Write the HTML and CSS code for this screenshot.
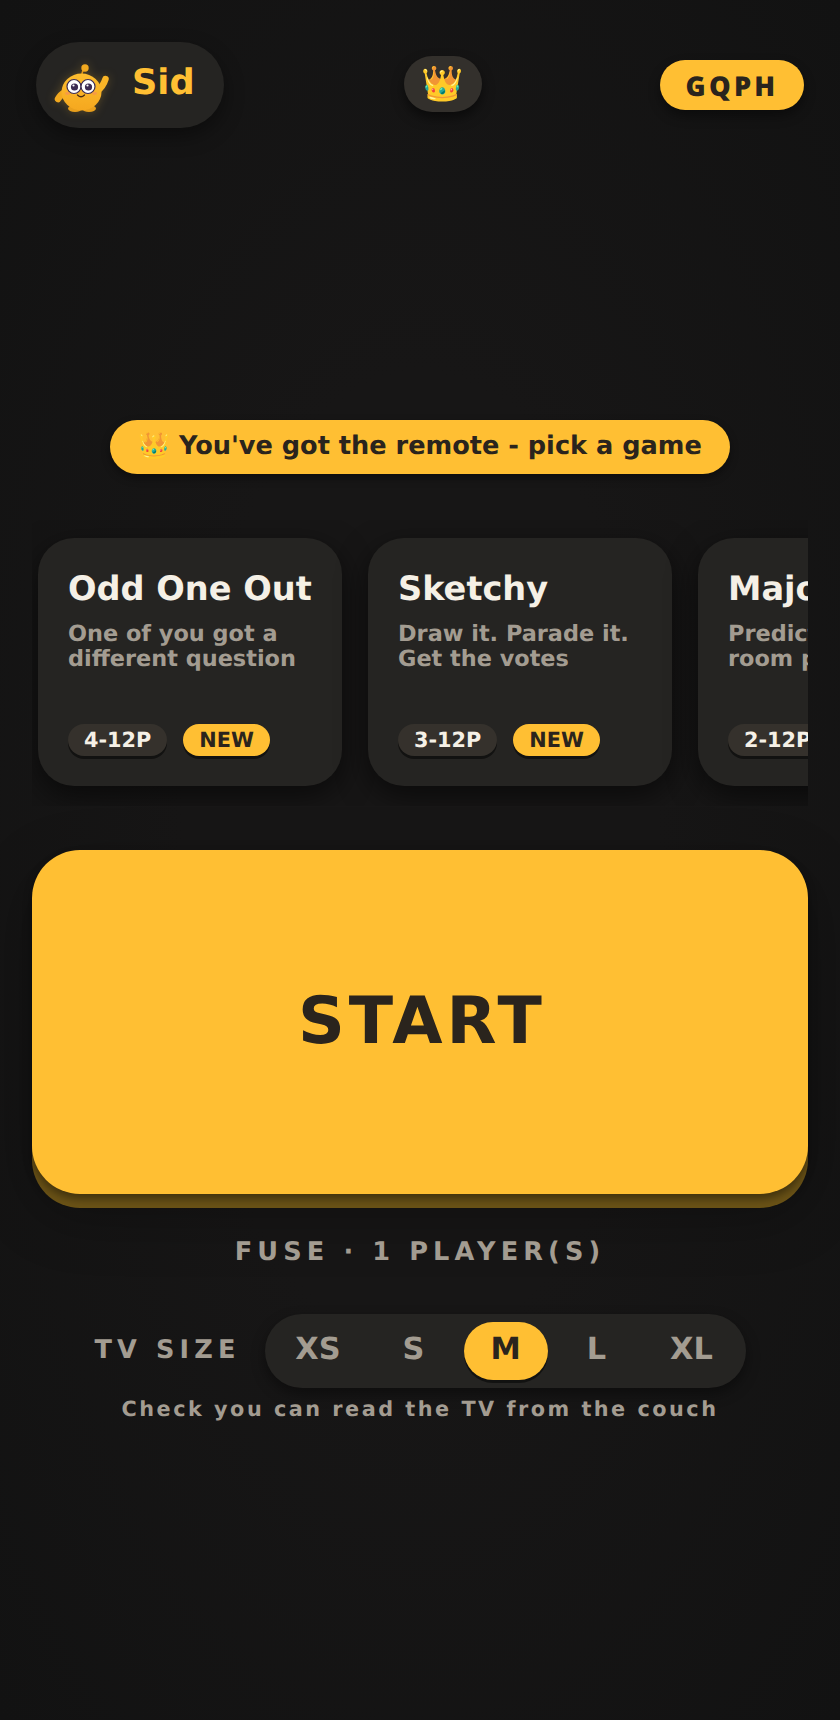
FILE: index.html
```html
<!DOCTYPE html>
<html lang="en">
	<head>
		<meta charset="UTF-8">
		<meta name="viewport" content="width=device-width,initial-scale=1">
		<title>Remote</title>
		<link rel="stylesheet" href="styles.css">
	</head>
	<body>
		<main class="page">
			<header class="top">
				<div class="player">
					<svg class="player__face" viewBox="14 6 56 56" aria-hidden="true">
						<defs>
							<linearGradient id="skin" x1="0" y1="0" x2="0" y2="1">
								<stop offset="0" stop-color="#fdbd2e"/>
								<stop offset="1" stop-color="#f5a81f"/>
							</linearGradient>
						</defs>
						<path d="M42 25 Q41.500 20 45 18" fill="none" stroke="#e0971a" stroke-width="1.500"/>
						<circle cx="45" cy="17" r="3.700" fill="#f2a91f"/>
						<path d="M57 40 Q63 36 65.500 28" fill="none" stroke="#fbb526" stroke-width="6.500" stroke-linecap="round"/>
						<path d="M25 41 Q20 44 18 48" fill="none" stroke="#f2a91f" stroke-width="6.500" stroke-linecap="round"/>
						<ellipse cx="35" cy="57.500" rx="7" ry="3.500" fill="#e99f1c"/>
						<ellipse cx="49" cy="57.500" rx="7" ry="3.500" fill="#e99f1c"/>
						<ellipse cx="41.500" cy="41" rx="20" ry="18.500" fill="url(#skin)"/>
						<circle cx="34" cy="35.500" r="7" fill="#fff" stroke="#3b2b52" stroke-width="1.200"/>
						<circle cx="48" cy="35.500" r="7" fill="#fff" stroke="#3b2b52" stroke-width="1.200"/>
						<circle cx="34.500" cy="36" r="3.600" fill="#3b2b52"/>
						<circle cx="48.500" cy="36" r="3.600" fill="#3b2b52"/>
						<circle cx="33.500" cy="34.500" r="1.100" fill="#fff"/>
						<circle cx="47.500" cy="34.500" r="1.100" fill="#fff"/>
						<ellipse cx="27.500" cy="42.500" rx="2.500" ry="1.400" fill="#f58a5c" opacity="0.600"/>
						<ellipse cx="54.500" cy="42.500" rx="2.500" ry="1.400" fill="#f58a5c" opacity="0.600"/>
						<path d="M37.500 44 Q41 47.500 44.500 44" fill="none" stroke="#4a2c12" stroke-width="1.300" stroke-linecap="round"/>
					</svg>
					<span class="player__name">Sid</span>
				</div>
				<div class="host">👑</div>
				<div class="room">GQPH</div>
			</header>

			<p class="banner">👑 You've got the remote - pick a game</p>

			<section class="games">
				<article class="game">
					<h2 class="game__title">Odd One Out</h2>
					<p class="game__text">One of you got a different question</p>
					<div class="game__tags">
						<span class="tag">4-12P</span>
						<span class="tag tag--new">NEW</span>
					</div>
				</article>
				<article class="game">
					<h2 class="game__title">Sketchy</h2>
					<p class="game__text">Draw it. Parade it. Get the votes</p>
					<div class="game__tags">
						<span class="tag">3-12P</span>
						<span class="tag tag--new">NEW</span>
					</div>
				</article>
				<article class="game">
					<h2 class="game__title">Majority</h2>
					<p class="game__text">Predict what the room picks</p>
					<div class="game__tags">
						<span class="tag">2-12P</span>
					</div>
				</article>
			</section>

			<button class="start">START</button>

			<p class="status">FUSE · 1 PLAYER(S)</p>

			<div class="size">
				<span class="size__label">TV SIZE</span>
				<div class="size__options">
					<span class="size__item size__item--xs">XS</span>
					<span class="size__item size__item--s">S</span>
					<span class="size__item size__item--m is-active">M</span>
					<span class="size__item size__item--l">L</span>
					<span class="size__item size__item--xl">XL</span>
				</div>
			</div>
			<p class="hint">Check you can read the TV from the couch</p>
		</main>
	</body>
</html>
```

FILE: styles.css
```css
html,
body
{
	margin: 0;
	height: 100%;
}

body
{
	background: radial-gradient(ellipse at center, #171616 40%, #121212 100%);
	background-color: #141414;
	font-family: 'DejaVu Sans', sans-serif;
	font-weight: bold;
	color: #f5f0e6;
	text-rendering: geometricPrecision;
}

.page
{
	padding: 42px 32px 0;
}

.top
{
	display: flex;
	align-items: center;
	justify-content: space-between;
	padding: 0 4px;
	height: 86px;
}

.player
{
	box-sizing: border-box;
	width: 188px;
	height: 86px;
	padding-left: 18px;
	display: flex;
	align-items: center;
	gap: 22px;
	border-radius: 43px;
	background-color: #252422;
	box-shadow: 0 8px 20px rgba(0, 0, 0, 0.4);
}

.player__face
{
	width: 56px;
	height: 56px;
	flex: none;
	filter: drop-shadow(0 0 5px rgba(255, 190, 50, 0.25));
}

.player__name
{
	padding-bottom: 5px;
	font-size: 35.2px;
	color: #ffbf33;
}

.host
{
	width: 78px;
	height: 56px;
	margin: 0 0 2px 2px;
	display: flex;
	align-items: center;
	justify-content: center;
	border-radius: 28px;
	background-color: #33302c;
	box-shadow: 0 6px 12px rgba(0, 0, 0, 0.5);
	font-size: 34px;
}

.room
{
	box-sizing: border-box;
	width: 144px;
	height: 50px;
	display: flex;
	align-items: center;
	justify-content: center;
	border-radius: 25px;
	background-color: #ffbf33;
	box-shadow: 0 6px 12px rgba(0, 0, 0, 0.4);
	color: #2a241d;
	font-family: 'Open Sans', sans-serif;
	font-weight: 800;
	font-size: 27.2px;
	letter-spacing: 0.12em;
}

.banner
{
	box-sizing: border-box;
	width: 620px;
	height: 54px;
	margin: 292px auto 0;
	border-radius: 27px;
	background-color: #ffbf33;
	box-shadow: 0 4px 8px rgba(0, 0, 0, 0.4);
	color: #2a241d;
	font-size: 25.6px;
	line-height: 52px;
	text-align: center;
	white-space: nowrap;
}

.games
{
	display: flex;
	gap: 26px;
	margin-top: 46px;
	padding: 18px 6px 20px;
	overflow: hidden;
}

.game
{
	box-sizing: border-box;
	flex: 0 0 304px;
	height: 248px;
	padding: 31px 30px 30px;
	display: flex;
	flex-direction: column;
	border-radius: 36px;
	background-color: #252422;
	box-shadow: 0 10px 30px rgba(0, 0, 0, 0.55);
}

.game__title
{
	margin: 0;
	font-size: 33.6px;
	line-height: 40px;
	white-space: nowrap;
	color: #f5f0e6;
}

.game__text
{
	margin: 13px 0 0;
	font-size: 22.4px;
	line-height: 25.2px;
	color: #a39c91;
}

.game__tags
{
	margin-top: auto;
	display: flex;
	gap: 16px;
}

.tag
{
	height: 32px;
	padding: 0 16px;
	display: flex;
	align-items: center;
	border-radius: 16px;
	background-color: #35312c;
	box-shadow: 0 3px 0 rgba(0, 0, 0, 0.5);
	font-size: 20.8px;
	white-space: nowrap;
	color: #f5f0e6;
}

.tag--new
{
	background-color: #ffbf33;
	color: #2a241d;
}

.start
{
	display: block;
	box-sizing: border-box;
	width: 776px;
	height: 344px;
	margin-top: 44px;
	padding: 0 0 2px 4px;
	border: 0;
	border-radius: 48px;
	background-color: #ffbf33;
	box-shadow: 0 5px 8px rgba(0, 0, 0, 0.4), 0 14px 0 #6a5216, 0 20px 60px rgba(0, 0, 0, 0.3);
	color: #2a241d;
	font-family: 'DejaVu Sans', sans-serif;
	font-weight: bold;
	font-size: 65px;
	letter-spacing: 4px;
	text-rendering: geometricPrecision;
}

.status
{
	margin: 42px 0 0;
	text-align: center;
	font-size: 25.6px;
	line-height: 32px;
	letter-spacing: 0.2em;
	color: #a39c91;
}

.size
{
	display: flex;
	align-items: center;
	justify-content: center;
	gap: 24px;
	margin-top: 46px;
}

.size__label
{
	padding-bottom: 2px;
	font-size: 25.6px;
	letter-spacing: 0.2em;
	color: #a39c91;
}

.size__options
{
	box-sizing: border-box;
	width: 481px;
	height: 74px;
	padding: 8px;
	display: flex;
	align-items: center;
	border-radius: 37px;
	background-color: #252422;
	box-shadow: 0 6px 14px rgba(0, 0, 0, 0.4);
}

.size__item
{
	box-sizing: border-box;
	height: 58px;
	padding-bottom: 4px;
	display: flex;
	align-items: center;
	justify-content: center;
	border-radius: 29px;
	font-size: 30.4px;
	color: #a39c91;
}

.size__item--xs { width: 91px; }
.size__item--s { width: 100px; }
.size__item--m { width: 84px; }
.size__item--l { width: 98px; }
.size__item--xl { width: 92px; }

.size__item.is-active
{
	background-color: #ffbf33;
	box-shadow: 0 3px 0 rgba(0, 0, 0, 0.5);
	color: #2a241d;
}

.hint
{
	margin: 7px 0 0;
	text-align: center;
	font-size: 20.8px;
	line-height: 28px;
	letter-spacing: 0.12em;
	color: #a39c91;
}
```
